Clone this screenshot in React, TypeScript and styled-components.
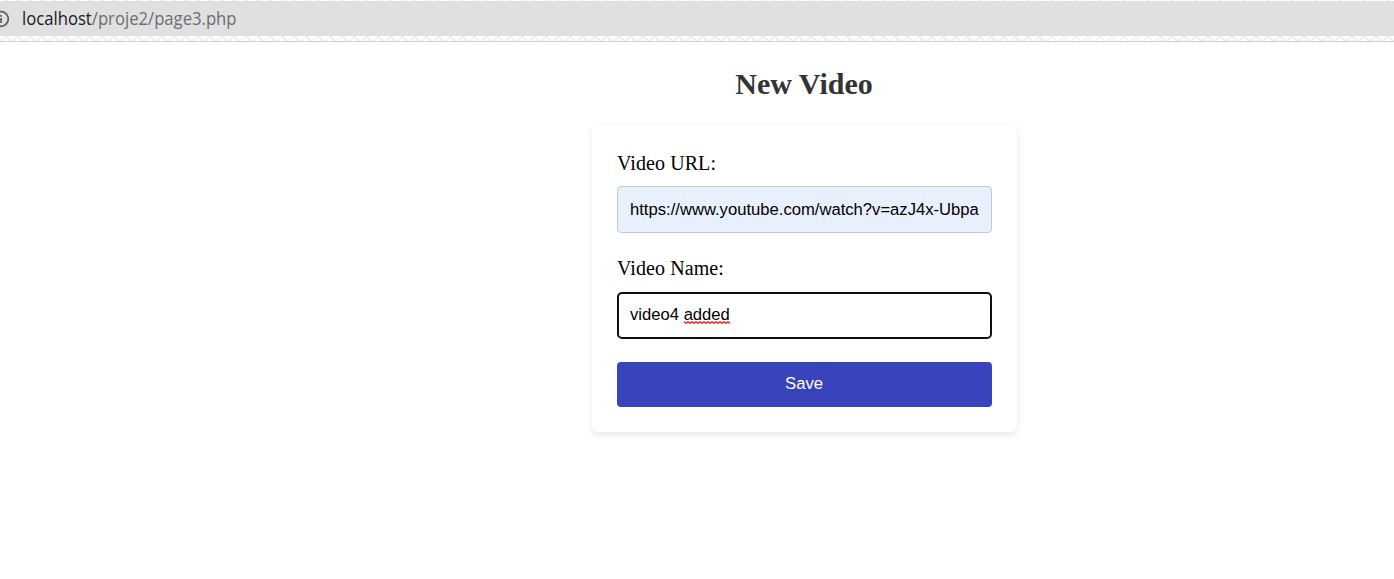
import React from "react";
import styled, { createGlobalStyle } from "styled-components";

const GlobalStyle = createGlobalStyle`
  html, body { margin: 0; background: #fff; }
  * { box-sizing: border-box; }
`;

const Page = styled.div`
  width: 100%;
  height: 100vh;
  overflow: hidden;
`;

const Toolbar = styled.header`
  height: 42px;
  padding: 1px 0 5px;
  border-bottom: 1px solid #cfcfcf;
  background:
    repeating-linear-gradient(45deg, transparent 0 6.5px, #eeeeee 6.5px 8.5px),
    repeating-linear-gradient(-45deg, #fff 0 6.5px, #f1f1f1 6.5px 8.5px);
`;

const AddressBar = styled.div`
  display: flex;
  align-items: center;
  height: 35px;
  background: #e0e0e0;
  font: 18px/35px "Open Sans", sans-serif;
  white-space: nowrap;
`;

const InfoIcon = styled.svg`
  flex: none;
  width: 18px;
  height: 18px;
  margin-left: -8px;
  margin-right: 12px;
`;

const Address = styled.svg`
  flex: none;
  width: 220px;
  height: 35px;
  overflow: visible;
`;

const Viewport = styled.main`
  display: flex;
  flex-direction: column;
  align-items: center;
  width: 1609px;
  height: 537px;
  font-family: "Liberation Serif", "Times New Roman", serif;
`;

const Title = styled.h1`
  margin: 24px 1px 25px 0;
  font-size: 30px;
  line-height: 35px;
  color: #333;
`;

const Card = styled.form`
  display: flex;
  flex-direction: column;
  width: 425px;
  height: 306px;
  padding: 26px 25px 25px;
  border-radius: 6px;
  background: #fff;
  box-shadow: 0 2.5px 6px rgba(0, 0, 0, 0.1);
`;

const Label = styled.label<{ $gap: number }>`
  margin-bottom: ${(p) => p.$gap}px;
  font-size: 20px;
  line-height: 23px;
  letter-spacing: 0.08px;
  color: #000;
`;

const Field = styled.div<{ $focused?: boolean }>`
  height: 47px;
  margin-bottom: ${(p) => (p.$focused ? 23 : 24)}px;
  padding: 0 ${(p) => (p.$focused ? 11 : 12)}px;
  border: ${(p) => (p.$focused ? "2px solid #101010" : "1px solid #c5c8ce")};
  border-radius: ${(p) => (p.$focused ? 5 : 4)}px;
  background: ${(p) => (p.$focused ? "#fff" : "#e8f0fe")};
  font: 16.64px/${(p) => (p.$focused ? 42 : 45)}px "Liberation Sans", Arial, sans-serif;
  color: #000;
`;

const FieldText = styled.div`
  overflow: hidden;
  white-space: nowrap;
`;

const Misspelled = styled.span`
  position: relative;
  display: inline-block;
`;

const Squiggle = styled.svg`
  position: absolute;
  left: 0;
  top: 27px;
  width: 100%;
  height: 3px;
`;

const SaveButton = styled.button`
  height: 45px;
  padding: 0 1px 2px 0;
  border: 0;
  border-radius: 4px;
  background: #3943bb;
  color: #fff;
  font: 16.67px "Liberation Sans", Arial, sans-serif;
`;

export default function App() {
  return (
    <Page>
      <GlobalStyle />
      <Toolbar>
        <AddressBar>
          <InfoIcon viewBox="0 0 18 18" fill="none" stroke="#5f6368">
            <circle cx="9" cy="9" r="7.3" strokeWidth="1.8" />
            <path d="M9 8v5M9 5v1.8" strokeWidth="1.8" />
          </InfoIcon>
          <Address>
            <text x="0" y="24" textLength="214.5" lengthAdjust="spacingAndGlyphs" fill="#6b6f73">
              <tspan fill="#202124">localhost</tspan>/proje2/page3.php
            </text>
          </Address>
        </AddressBar>
      </Toolbar>
      <Viewport>
        <Title>New Video</Title>
        <Card>
          <Label $gap={11}>Video URL:</Label>
          <Field>
            <FieldText>https://www.youtube.com/watch?v=azJ4x-Ubpa</FieldText>
          </Field>
          <Label $gap={12}>Video Name:</Label>
          <Field $focused>
            <FieldText>
              video4{" "}
              <Misspelled>
                added
                <Squiggle>
                  <defs>
                    <pattern id="squiggle" width="4" height="3" patternUnits="userSpaceOnUse">
                      <path d="M-1 1.5L0 .8L2 2.2L4 .8L5 1.5" fill="none" stroke="#f00" strokeWidth="1.3" />
                    </pattern>
                  </defs>
                  <rect width="100%" height="3" fill="url(#squiggle)" />
                </Squiggle>
              </Misspelled>
            </FieldText>
          </Field>
          <SaveButton type="button">Save</SaveButton>
        </Card>
      </Viewport>
    </Page>
  );
}
